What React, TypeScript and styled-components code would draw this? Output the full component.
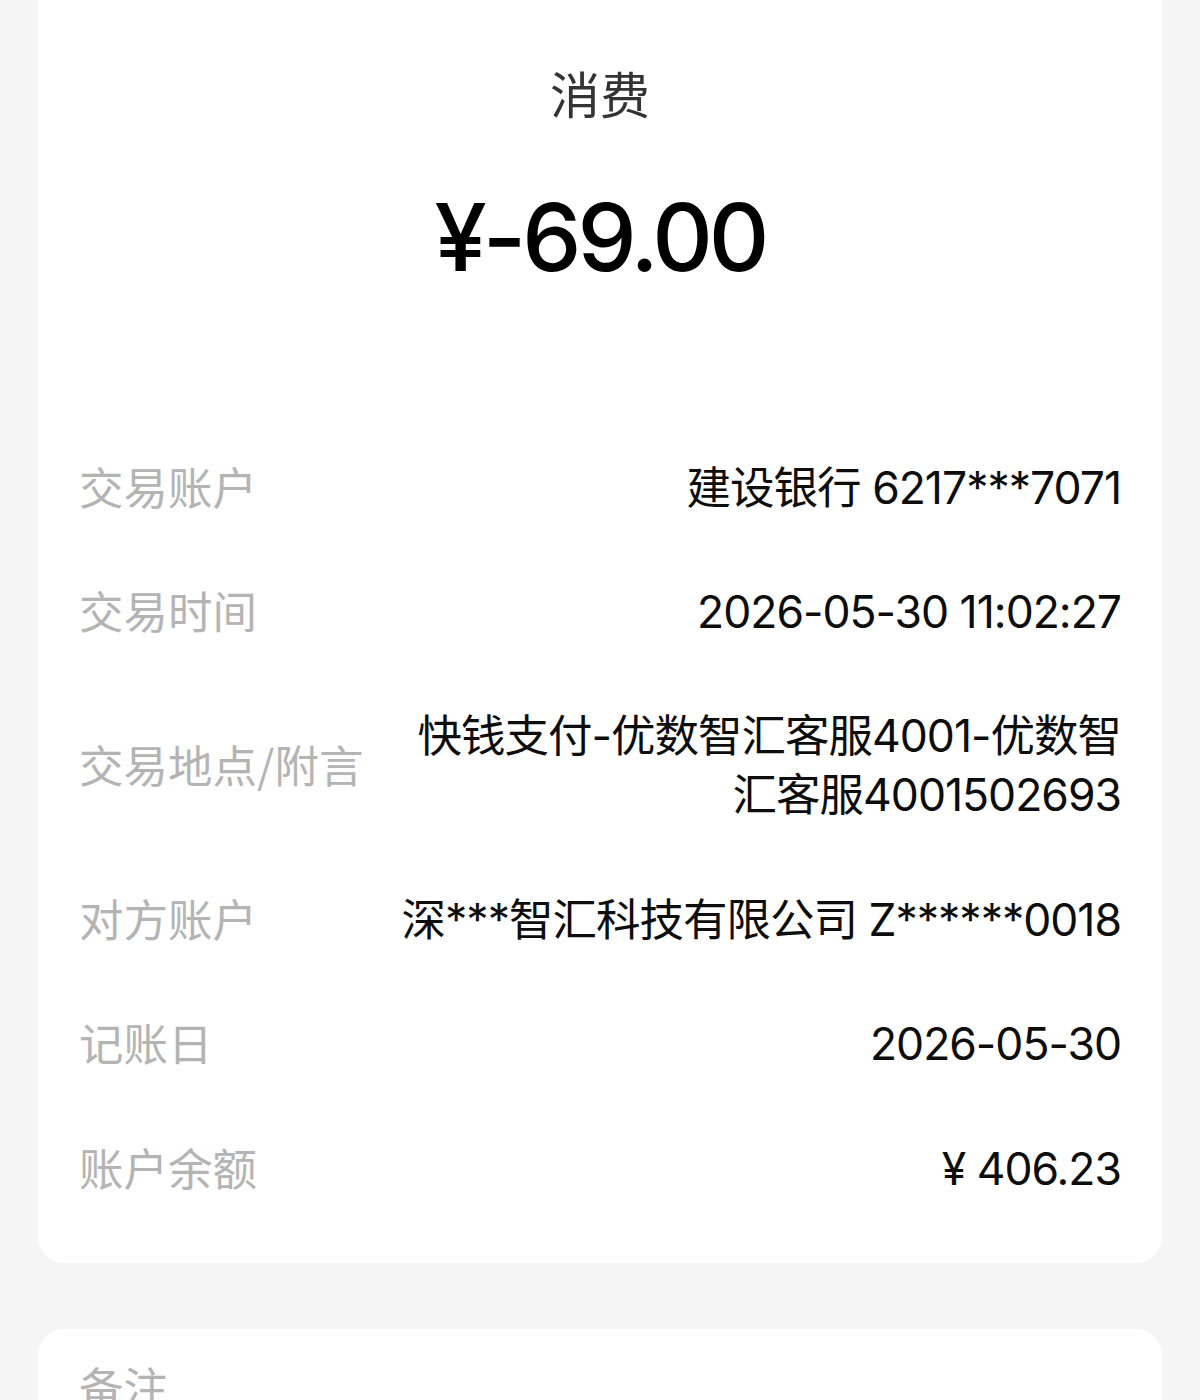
import React from "react";
import styled, { createGlobalStyle } from "styled-components";

const Global = createGlobalStyle`
  html, body {
    margin: 0;
    padding: 0;
    background: #f5f5f5;
  }
  body {
    font-family: Inter, "Noto Sans CJK SC", sans-serif;
    -webkit-font-smoothing: antialiased;
  }
`;

const Page = styled.div`
  display: flex;
  flex-direction: column;
  gap: 66px;
  padding: 0 38px;
  height: 1400px;
  overflow: hidden;
  box-sizing: border-box;
`;

const Card = styled.section<{ $top?: boolean }>`
  background: #ffffff;
  border-radius: ${(p) => (p.$top ? "0 0 26px 26px" : "26px")};
  padding: ${(p) => (p.$top ? "62px 41px 35px" : "27px 41px 40px")};
  display: flex;
  flex-direction: column;
`;

const Title = styled.div`
  text-align: center;
  font-family: "Noto Sans CJK SC", sans-serif;
  font-size: 50px;
  line-height: 60px;
  color: #333333;
`;

const Amount = styled.div`
  margin-top: 55px;
  text-align: center;
  font-size: 94px;
  line-height: 120px;
  font-weight: 500;
  color: #000000;
  letter-spacing: -4px;
`;

const Rows = styled.div`
  margin-top: 126px;
  display: flex;
  flex-direction: column;
`;

const Row = styled.div`
  display: flex;
  align-items: center;
  justify-content: space-between;
  gap: 40px;
  padding: 32.7px 0;
`;

const Label = styled.div`
  flex-shrink: 0;
  font-family: "Noto Sans CJK SC", sans-serif;
  font-size: 44.5px;
  line-height: 59px;
  color: #b4b4b4;
`;

const Value = styled.div`
  flex: 1;
  text-align: right;
  font-size: 44.5px;
  letter-spacing: -1px;
  line-height: 59px;
  color: #0d0d0d;
  word-break: break-all;
  padding-top: 3px;
  margin-bottom: -3px;
`;

const rows: [string, string][] = [
  ["交易账户", "建设银行 6217***7071"],
  ["交易时间", "2026-05-30 11:02:27"],
  ["交易地点/附言", "快钱支付-优数智汇客服4001-优数智汇客服4001502693"],
  ["对方账户", "深***智汇科技有限公司 Z******0018"],
  ["记账日", "2026-05-30"],
  ["账户余额", "¥ 406.23"],
];

export default function App() {
  return (
    <>
      <Global />
      <Page>
        <Card $top>
          <Title>消费</Title>
          <Amount>¥-69.00</Amount>
          <Rows>
            {rows.map(([l, v]) => (
              <Row key={l}>
                <Label>{l}</Label>
                <Value>{v}</Value>
              </Row>
            ))}
          </Rows>
        </Card>
        <Card>
          <Label>备注</Label>
        </Card>
      </Page>
    </>
  );
}
